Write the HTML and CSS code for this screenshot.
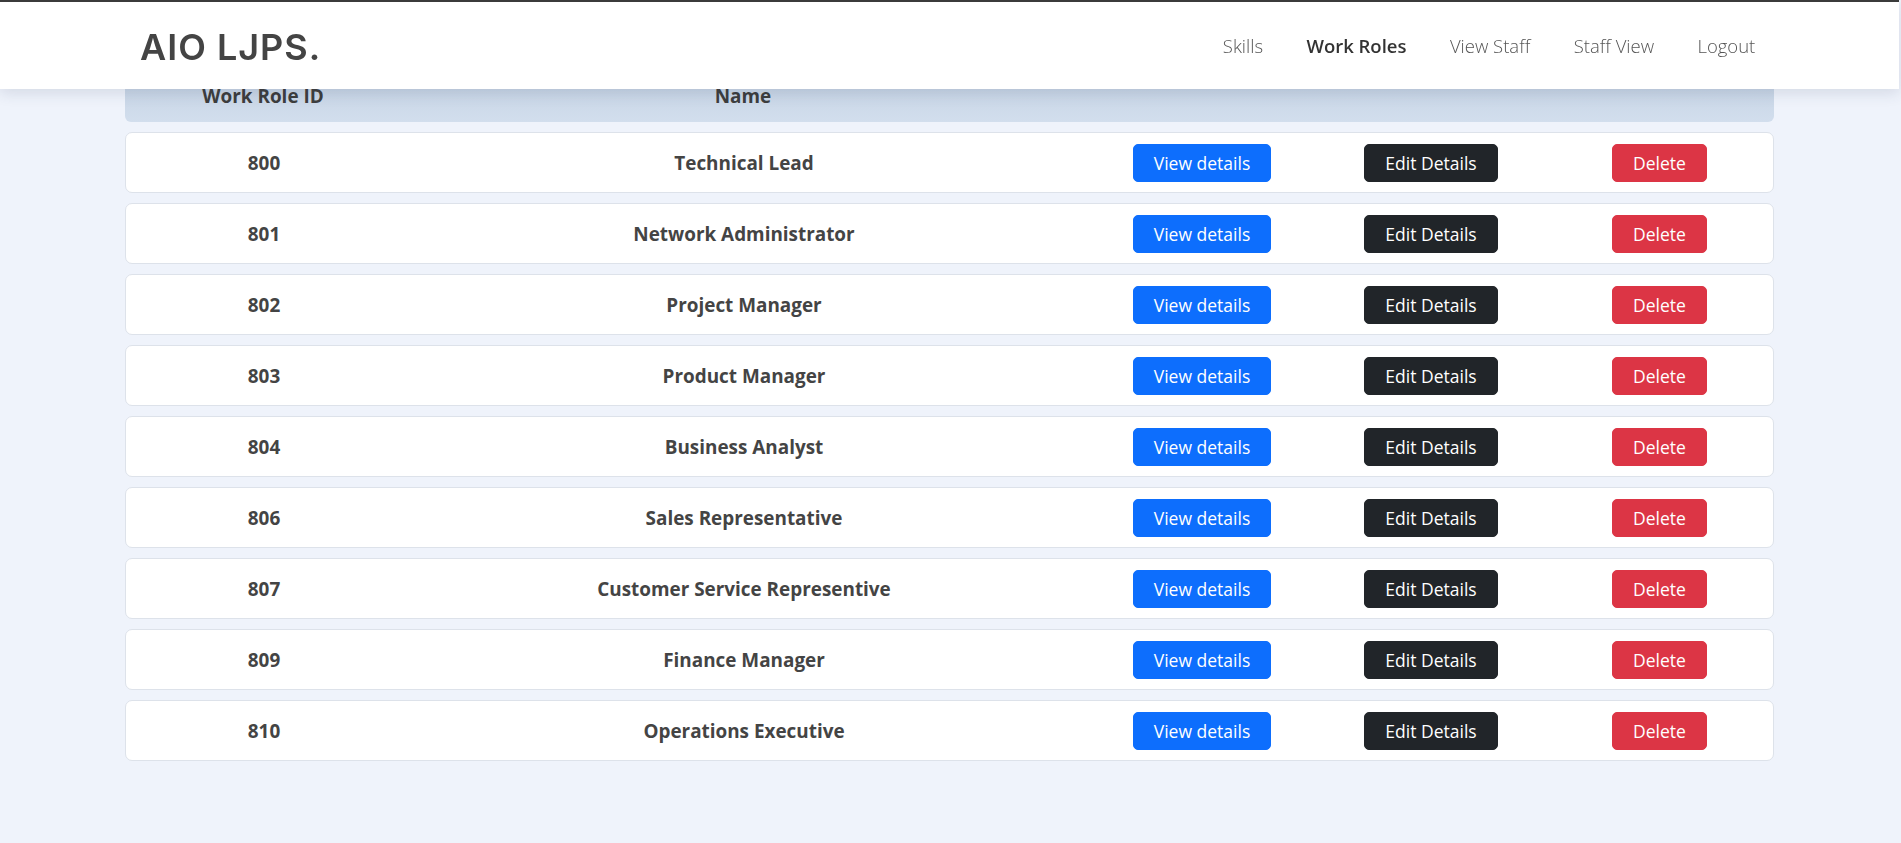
FILE: index.html
```html
<!DOCTYPE html>
<html lang="en">
<head>
<meta charset="utf-8">
<title>Work Roles - AIO LJPS</title>
<link rel="stylesheet" href="styles.css">
</head>
<body>
<header class="topbar">
  <div class="topbar-inner">
    <a class="brand" href="#">AIO LJPS.</a>
    <nav class="nav">
      <a class="nav-link" href="#">Skills</a>
      <a class="nav-link active" href="#">Work Roles</a>
      <a class="nav-link" href="#">View Staff</a>
      <a class="nav-link" href="#">Staff View</a>
      <a class="nav-link" href="#">Logout</a>
    </nav>
  </div>
</header>

<main class="content">
  <div class="roles">
    <div class="row head">
      <div class="cell">Work Role ID</div>
      <div class="cell">Name</div>
      <div class="cell"></div>
      <div class="cell"></div>
      <div class="cell"></div>
    </div>

    <div class="row item">
      <div class="cell">800</div>
      <div class="cell">Technical Lead</div>
      <div class="cell"><button class="btn btn-primary">View details</button></div>
      <div class="cell"><button class="btn btn-dark">Edit Details</button></div>
      <div class="cell"><button class="btn btn-danger">Delete</button></div>
    </div>
    <div class="row item">
      <div class="cell">801</div>
      <div class="cell">Network Administrator</div>
      <div class="cell"><button class="btn btn-primary">View details</button></div>
      <div class="cell"><button class="btn btn-dark">Edit Details</button></div>
      <div class="cell"><button class="btn btn-danger">Delete</button></div>
    </div>
    <div class="row item">
      <div class="cell">802</div>
      <div class="cell">Project Manager</div>
      <div class="cell"><button class="btn btn-primary">View details</button></div>
      <div class="cell"><button class="btn btn-dark">Edit Details</button></div>
      <div class="cell"><button class="btn btn-danger">Delete</button></div>
    </div>
    <div class="row item">
      <div class="cell">803</div>
      <div class="cell">Product Manager</div>
      <div class="cell"><button class="btn btn-primary">View details</button></div>
      <div class="cell"><button class="btn btn-dark">Edit Details</button></div>
      <div class="cell"><button class="btn btn-danger">Delete</button></div>
    </div>
    <div class="row item">
      <div class="cell">804</div>
      <div class="cell">Business Analyst</div>
      <div class="cell"><button class="btn btn-primary">View details</button></div>
      <div class="cell"><button class="btn btn-dark">Edit Details</button></div>
      <div class="cell"><button class="btn btn-danger">Delete</button></div>
    </div>
    <div class="row item">
      <div class="cell">806</div>
      <div class="cell">Sales Representative</div>
      <div class="cell"><button class="btn btn-primary">View details</button></div>
      <div class="cell"><button class="btn btn-dark">Edit Details</button></div>
      <div class="cell"><button class="btn btn-danger">Delete</button></div>
    </div>
    <div class="row item">
      <div class="cell">807</div>
      <div class="cell">Customer Service Representive</div>
      <div class="cell"><button class="btn btn-primary">View details</button></div>
      <div class="cell"><button class="btn btn-dark">Edit Details</button></div>
      <div class="cell"><button class="btn btn-danger">Delete</button></div>
    </div>
    <div class="row item">
      <div class="cell">809</div>
      <div class="cell">Finance Manager</div>
      <div class="cell"><button class="btn btn-primary">View details</button></div>
      <div class="cell"><button class="btn btn-dark">Edit Details</button></div>
      <div class="cell"><button class="btn btn-danger">Delete</button></div>
    </div>
    <div class="row item">
      <div class="cell">810</div>
      <div class="cell">Operations Executive</div>
      <div class="cell"><button class="btn btn-primary">View details</button></div>
      <div class="cell"><button class="btn btn-dark">Edit Details</button></div>
      <div class="cell"><button class="btn btn-danger">Delete</button></div>
    </div>
  </div>
</main>
</body>
</html>
```

FILE: styles.css
```css
* {
  box-sizing: border-box;
}

html,
body {
  margin: 0;
  padding: 0;
}

body {
  background: #eff3fb;
  font-family: "Open Sans", "Noto Sans", sans-serif;
  color: #444;
  min-height: 843px;
  overflow: hidden;
}

/* ---------- top navigation ---------- */
.topbar {
  position: fixed;
  top: 0;
  left: 0;
  right: 2px;
  height: 89px;
  background: #fff;
  border-top: 2px solid #3b3b3b;
  box-shadow: 0 4px 14px rgba(40, 60, 90, 0.14);
  z-index: 10;
}

.topbar-inner {
  width: 1649px;
  margin: 0 auto;
  height: 100%;
  display: flex;
  align-items: center;
  justify-content: space-between;
  padding: 0 0 0 16px;
  transform: translateX(-1px);
}

.brand {
  font-family: "Inter", "Lato", sans-serif;
  font-weight: 600;
  font-size: 36px;
  letter-spacing: 1px;
  color: #444;
  text-decoration: none;
  margin-top: 2px;
}

.nav {
  display: flex;
  align-items: center;
  margin-right: -4px;
}

.nav-link {
  font-family: "Open Sans", sans-serif;
  font-weight: 300;
  font-size: 18.5px;
  color: #555;
  text-decoration: none;
  padding: 0 21.7px;
}

.nav-link.active {
  font-weight: 600;
  color: #333;
}

/* ---------- list ---------- */
.content {
  width: 1649px;
  margin: 73.5px auto 0;
  transform: translateX(-1px);
}

.roles {
  display: flex;
  flex-direction: column;
  gap: 10.4px;
}

.row {
  display: grid;
  grid-template-columns: 276px 684px 232px 226px 231px;
  align-items: center;
}

.cell {
  text-align: center;
  font-weight: 700;
  font-size: 18.9px;
  color: #444;
}

.row.head {
  height: 48.5px;
  background: linear-gradient(#c4d2e3, #d2deed);
  border-radius: 0 0 6px 6px;
}

.row.head .cell {
  font-weight: 700;
  font-size: 18.9px;
  color: #3d3d3d;
  padding-bottom: 3px;
}

.row.item {
  height: 60.6px;
  background: #fff;
  border: 1px solid #dde2ea;
  border-radius: 7px;
}

/* ---------- buttons ---------- */
.btn {
  font-family: "Open Sans", "Noto Sans", sans-serif;
  font-size: 17.5px;
  font-weight: 400;
  line-height: 24px;
  padding: 6px 20px;
  border: 1px solid transparent;
  border-radius: 5px;
  color: #fff;
  cursor: pointer;
}

.btn-primary {
  background: #0d6efd;
  border-color: #0d6efd;
}

.btn-dark {
  background: #212529;
  border-color: #212529;
}

.btn-danger {
  background: #dc3545;
  border-color: #dc3545;
}
```
